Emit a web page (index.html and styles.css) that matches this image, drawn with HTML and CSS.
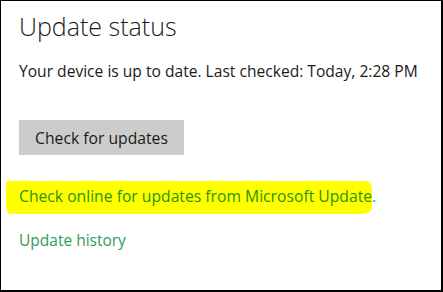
FILE: index.html
```html
<!DOCTYPE html>
<html lang="en">

<head>
    <meta charset="utf-8">
    <title>Update status</title>
    <link rel="stylesheet" href="styles.css">
</head>

<body>
    <main class="panel">
        <h1 class="titel">Update status</h1>
        <p class="status">Your device is up to date. Last checked: Today, 2:28 PM</p>
        <button class="knap">Check for updates</button>
        <p class="online"><span class="markering"><a href="#">Check online for updates from Microsoft Update</a></span><span class="punktum">.</span></p>
        <p class="historik"><a href="#">Update history</a></p>
    </main>
</body>

</html>
```

FILE: styles.css
```css
html,
body {
    margin: 0;
    height: 100%;
    background-color: #fff;
}

.panel {
    box-sizing: border-box;
    height: 292px;
    width: 443px;
    border-top: 1px solid #000;
    border-left: 1px solid #000;
    border-right: 2px solid #000;
    border-bottom: 2px solid #000;
    padding: 8px 0 0 18px;
    font-family: "Open Sans", "Noto Sans", sans-serif;
    color: #1a1a1a;
}

.titel {
    font-weight: 300;
    font-size: 25px;
    line-height: 34px;
    margin: 0;
}

.status {
    font-size: 15.6px;
    line-height: 21px;
    margin: 18px 0 0 0;
}

.knap {
    display: block;
    margin-top: 38px;
    width: 165px;
    height: 35px;
    border: none;
    background-color: #cccccc;
    font-family: "Open Sans", "Noto Sans", sans-serif;
    font-size: 15.7px;
    color: #1a1a1a;
    padding: 0;
}

.online {
    margin: 26px 0 0 -13px;
    font-size: 15.7px;
    line-height: 21px;
}

.markering {
    display: inline-block;
    background-color: #ffff00;
    padding: 5px 0 7px 13px;
    border-radius: 2px 6px 12px 4px / 3px 8px 6px 10px;
}

.online a {
    color: #2a9410;
    text-decoration: none;
}

.punktum {
    color: #3a9a6a;
}

.historik {
    margin: 16px 0 0 0;
    font-size: 15.5px;
    line-height: 21px;
}

.historik a {
    color: #2e9c5c;
    text-decoration: none;
}
```
